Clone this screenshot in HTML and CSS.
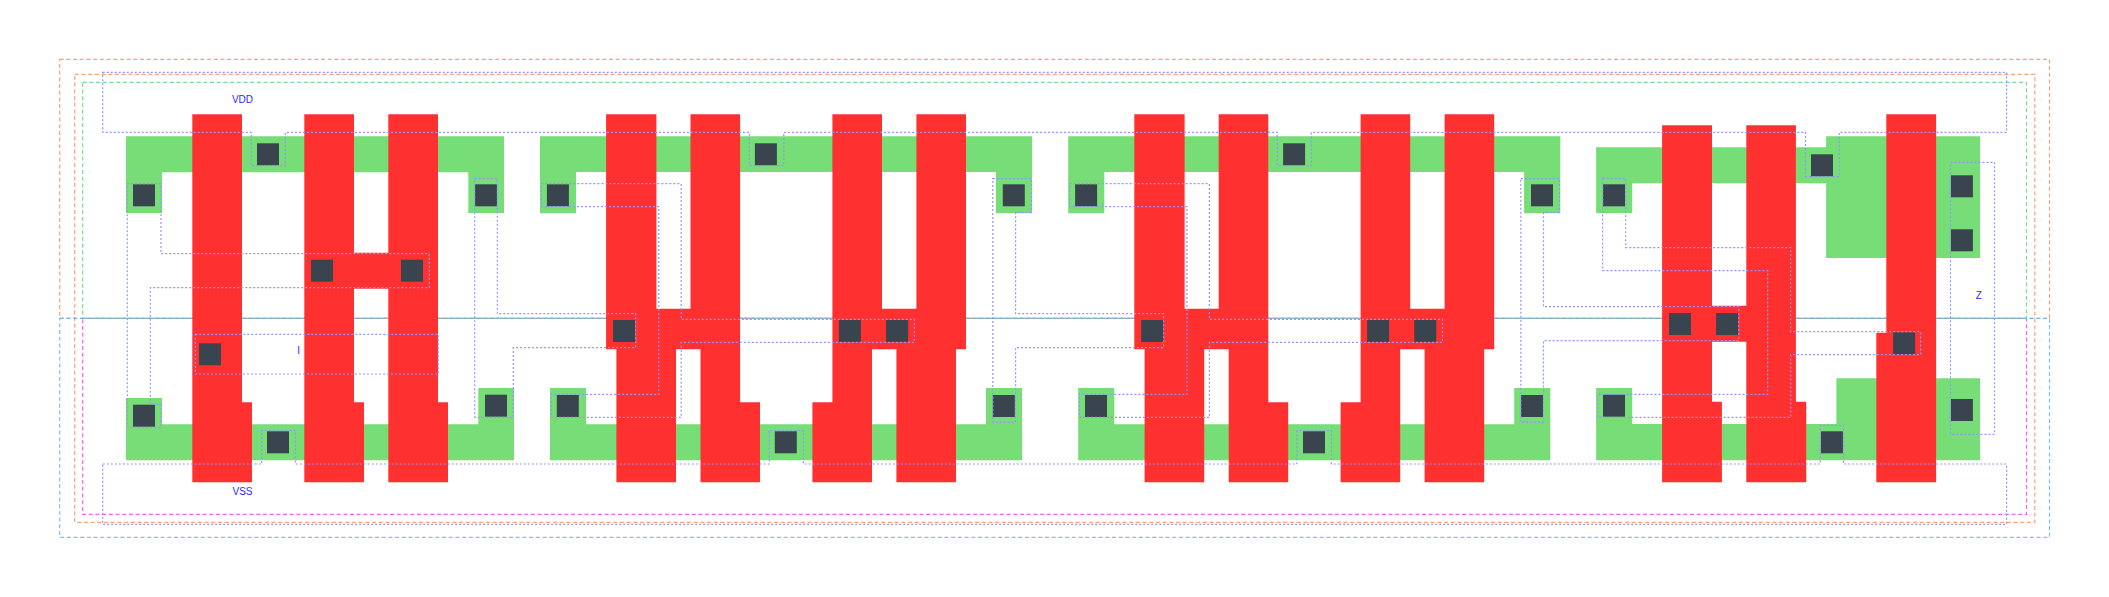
FILE: index.html
```html
<!DOCTYPE html>
<html lang="en">
<head>
<meta charset="utf-8">
<title>Cell layout</title>
<link rel="stylesheet" href="styles.css">
</head>
<body>
<svg class="layout" width="2109" height="597" viewBox="0 0 2109 597" xmlns="http://www.w3.org/2000/svg">
  <defs>
    <g id="cell-active">
      <polygon class="active" points="540,136.3 1032.1,136.3 1032.1,213.3 995.9,213.3 995.9,172 576.1,172 576.1,213.3 540,213.3"/>
      <polygon class="active" points="550,388 586.1,388 586.1,424.3 986,424.3 986,388 1022.1,388 1022.1,460.3 550,460.3"/>
    </g>
    <g id="cell-poly">
      <polygon class="poly" points="606.1,114.3 656.4,114.3 656.4,308.7 690.5,308.7 690.5,114.3 740.1,114.3 740.1,402.3 760,402.3 760,482.3 700.5,482.3 700.5,349.3 676,349.3 676,482.3 616.4,482.3 616.4,349.3 606.1,349.3"/>
      <polygon class="poly" points="832.4,114.3 882,114.3 882,308.7 916.4,308.7 916.4,114.3 966,114.3 966,349.3 956,349.3 956,482.3 896.4,482.3 896.4,349.3 872,349.3 872,482.3 812.4,482.3 812.4,402.3 832.4,402.3"/>
    </g>
    <g id="cell-contacts">
      <rect class="contact" x="546.9" y="184.3" width="22" height="22"/>
      <rect class="contact" x="754.9" y="143.3" width="22" height="22"/>
      <rect class="contact" x="1002.8" y="184.3" width="22" height="22"/>
      <rect class="contact" x="613" y="320" width="22" height="22"/>
      <rect class="contact" x="838.9" y="320" width="22" height="22"/>
      <rect class="contact" x="886.1" y="320" width="22" height="22"/>
      <rect class="contact" x="556.8" y="395" width="22" height="22"/>
      <rect class="contact" x="774.8" y="431.3" width="22" height="22"/>
      <rect class="contact" x="992.8" y="395" width="22" height="22"/>
    </g>
    <polygon id="cell-net" class="metal" points="541.4,183.7 681.2,183.7 681.2,319.3 914.3,319.3 914.3,342.3 681.2,342.3 681.2,417.3 551,417.3 551,394.3 658.8,394.3 658.8,206.7 541.4,206.7"/>
  </defs>

  <g class="bounds">
    <rect class="bound-magenta" x="82.7" y="318.3" width="1943.8" height="196"/>
    <rect class="bound-green" x="82.7" y="82.3" width="1943.8" height="236"/>
    <rect class="bound-orange" x="59.7" y="59.3" width="1989.8" height="259"/>
    <rect class="bound-orange" x="74.7" y="74.3" width="1960.1" height="448"/>
    <rect class="bound-blue" x="59.7" y="318.3" width="1989.8" height="219"/>
  </g>

  <g>
    <polygon class="active" points="126,136.3 504,136.3 504,213 468.3,213 468.3,172.3 162,172.3 162,213 126,213"/>
    <polygon class="active" points="126,398 162,398 162,424.3 478.3,424.3 478.3,388 514,388 514,460.3 126,460.3"/>
    <use href="#cell-active"/>
    <use href="#cell-active" transform="translate(528.2 0)"/>
    <polygon class="active" points="1596.1,147.3 1826.1,147.3 1826.1,136.3 1980.1,136.3 1980.1,258 1826.1,258 1826.1,183.3 1632.2,183.3 1632.2,213 1596.1,213"/>
    <polygon class="active" points="1596.1,388 1632.2,388 1632.2,424 1836.4,424 1836.4,378.3 1980.1,378.3 1980.1,460.3 1596.1,460.3"/>
  </g>

  <g>
    <polygon class="poly" points="192.3,114.3 242,114.3 242,402.3 252,402.3 252,482.3 192.3,482.3"/>
    <polygon class="poly" points="304.3,114.3 354,114.3 354,252.7 388.3,252.7 388.3,114.3 438,114.3 438,402.3 448,402.3 448,482.3 388.3,482.3 388.3,288.7 354,288.7 354,402.3 364,402.3 364,482.3 304.3,482.3"/>
    <use href="#cell-poly"/>
    <use href="#cell-poly" transform="translate(528.2 0)"/>
    <polygon class="poly" points="1662.1,125.3 1712,125.3 1712,305.7 1746.3,305.7 1746.3,125.3 1795.9,125.3 1795.9,401.7 1806.2,401.7 1806.2,482.3 1746.3,482.3 1746.3,341.7 1712,341.7 1712,401.7 1721.9,401.7 1721.9,482.3 1662.1,482.3"/>
    <polygon class="poly" points="1886.3,114.3 1936.1,114.3 1936.1,482.3 1876.3,482.3 1876.3,332.7 1886.3,332.7"/>
  </g>

  <g>
    <rect class="contact" x="257" y="143.3" width="22" height="22"/>
    <rect class="contact" x="133" y="184.3" width="22" height="22"/>
    <rect class="contact" x="475" y="184.3" width="22" height="22"/>
    <rect class="contact" x="311" y="259.7" width="22" height="22"/>
    <rect class="contact" x="401" y="259.7" width="22" height="22"/>
    <rect class="contact" x="199" y="343.3" width="22" height="22"/>
    <rect class="contact" x="133" y="404.7" width="22" height="22"/>
    <rect class="contact" x="267" y="431.3" width="22" height="22"/>
    <rect class="contact" x="485" y="394.7" width="22" height="22"/>
    <use href="#cell-contacts"/>
    <use href="#cell-contacts" transform="translate(528.2 0)"/>
    <rect class="contact" x="1603" y="184.3" width="22" height="22"/>
    <rect class="contact" x="1811" y="154.3" width="22" height="22"/>
    <rect class="contact" x="1950.9" y="175.3" width="22" height="22"/>
    <rect class="contact" x="1950.9" y="229.3" width="22" height="22"/>
    <rect class="contact" x="1950.9" y="399" width="22" height="22"/>
    <rect class="contact" x="1669" y="313" width="22" height="22"/>
    <rect class="contact" x="1716.1" y="313" width="22" height="22"/>
    <rect class="contact" x="1893.1" y="332.3" width="22" height="22"/>
    <rect class="contact" x="1603" y="394.7" width="22" height="22"/>
    <rect class="contact" x="1820.9" y="431.3" width="22" height="22"/>
  </g>

  <g>
    <polygon class="metal" points="102.7,72.3 2006.6,72.3 2006.6,132.3 1839.2,132.3 1839.2,176.7 1805.5,176.7 1805.5,132.3 1311.4,132.3 1311.4,165.7 1277.3,165.7 1277.3,132.3 783.8,132.3 783.8,165.7 749.4,165.7 749.4,132.3 285.3,132.3 285.3,165.7 251.3,165.7 251.3,132.3 102.7,132.3"/>
    <polygon class="metal" points="102.7,464 261.7,464 261.7,430.5 295.3,430.5 295.3,464 769.3,464 769.3,430.5 803.4,430.5 803.4,464 1296.9,464 1296.9,430.5 1331.4,430.5 1331.4,464 1820.3,464 1820.3,425.3 1843.6,425.3 1843.6,464 2006.6,464 2006.6,524.3 102.7,524.3"/>
    <polygon class="metal" points="127.3,183.7 161,183.7 161,253.7 429.3,253.7 429.3,287.7 150.3,287.7 150.3,404.3 161,404.3 161,427.3 127.3,427.3"/>
    <rect class="metal" x="195.3" y="334.3" width="243" height="39.7"/>
    <polygon class="metal" points="474.7,178.3 497.3,178.3 497.3,313.7 635.7,313.7 635.7,347.7 513.3,347.7 513.3,417.3 474.7,417.3"/>
    <use href="#cell-net"/>
    <polygon class="metal" points="992.8,178.7 1031.4,178.7 1031.4,212.3 1015.6,212.3 1015.6,313.7 1163.6,313.7 1163.6,347.7 1015.6,347.7 1015.6,422.3 992.8,422.3"/>
    <use href="#cell-net" transform="translate(528.2 0)"/>
    <polygon class="metal" points="1520.8,178.7 1559.4,178.7 1559.4,212.3 1543.5,212.3 1543.5,306.7 1738.8,306.7 1738.8,340.7 1543.5,340.7 1543.5,422.3 1520.8,422.3"/>
    <polygon class="metal" points="1602.7,178.3 1625.7,178.3 1625.7,247.7 1790.7,247.7 1790.7,331.7 1920.6,331.7 1920.6,354.7 1790.7,354.7 1790.7,417.3 1597.5,417.3 1597.5,394.3 1767.7,394.3 1767.7,270.7 1602.7,270.7"/>
    <rect class="metal" x="1950.5" y="162.3" width="44" height="272"/>
  </g>

  <g class="labels">
    <text x="242.5" y="102.6">VDD</text>
    <text x="242.5" y="494.6">VSS</text>
    <text x="298.7" y="354.3">I</text>
    <text x="1978.7" y="298.6">Z</text>
  </g>
</svg>
</body>
</html>
```

FILE: styles.css
```css
html, body {
  margin: 0;
  padding: 0;
  background: #ffffff;
}

.layout {
  display: block;
}

.bound-orange,
.bound-blue,
.bound-green,
.bound-magenta {
  fill: none;
  stroke-width: 1.2;
  stroke-dasharray: 4 2.7;
  stroke-opacity: 0.85;
}

.bound-orange { stroke: #ff9060; }
.bound-blue { stroke: #66b8ee; }
.bound-green { stroke: #5fd87f; }
.bound-magenta { stroke: #ff44ee; }

.active {
  fill: #77dd77;
}

.poly {
  fill: #ff3030;
}

.contact {
  fill: #39444e;
}

.metal {
  fill: none;
  stroke: #9494ff;
  stroke-width: 1.2;
  stroke-dasharray: 2 2;
}

.labels text {
  fill: #2a2aff;
  font-family: "Liberation Sans", Arial, sans-serif;
  font-size: 10px;
  text-anchor: middle;
}
```
